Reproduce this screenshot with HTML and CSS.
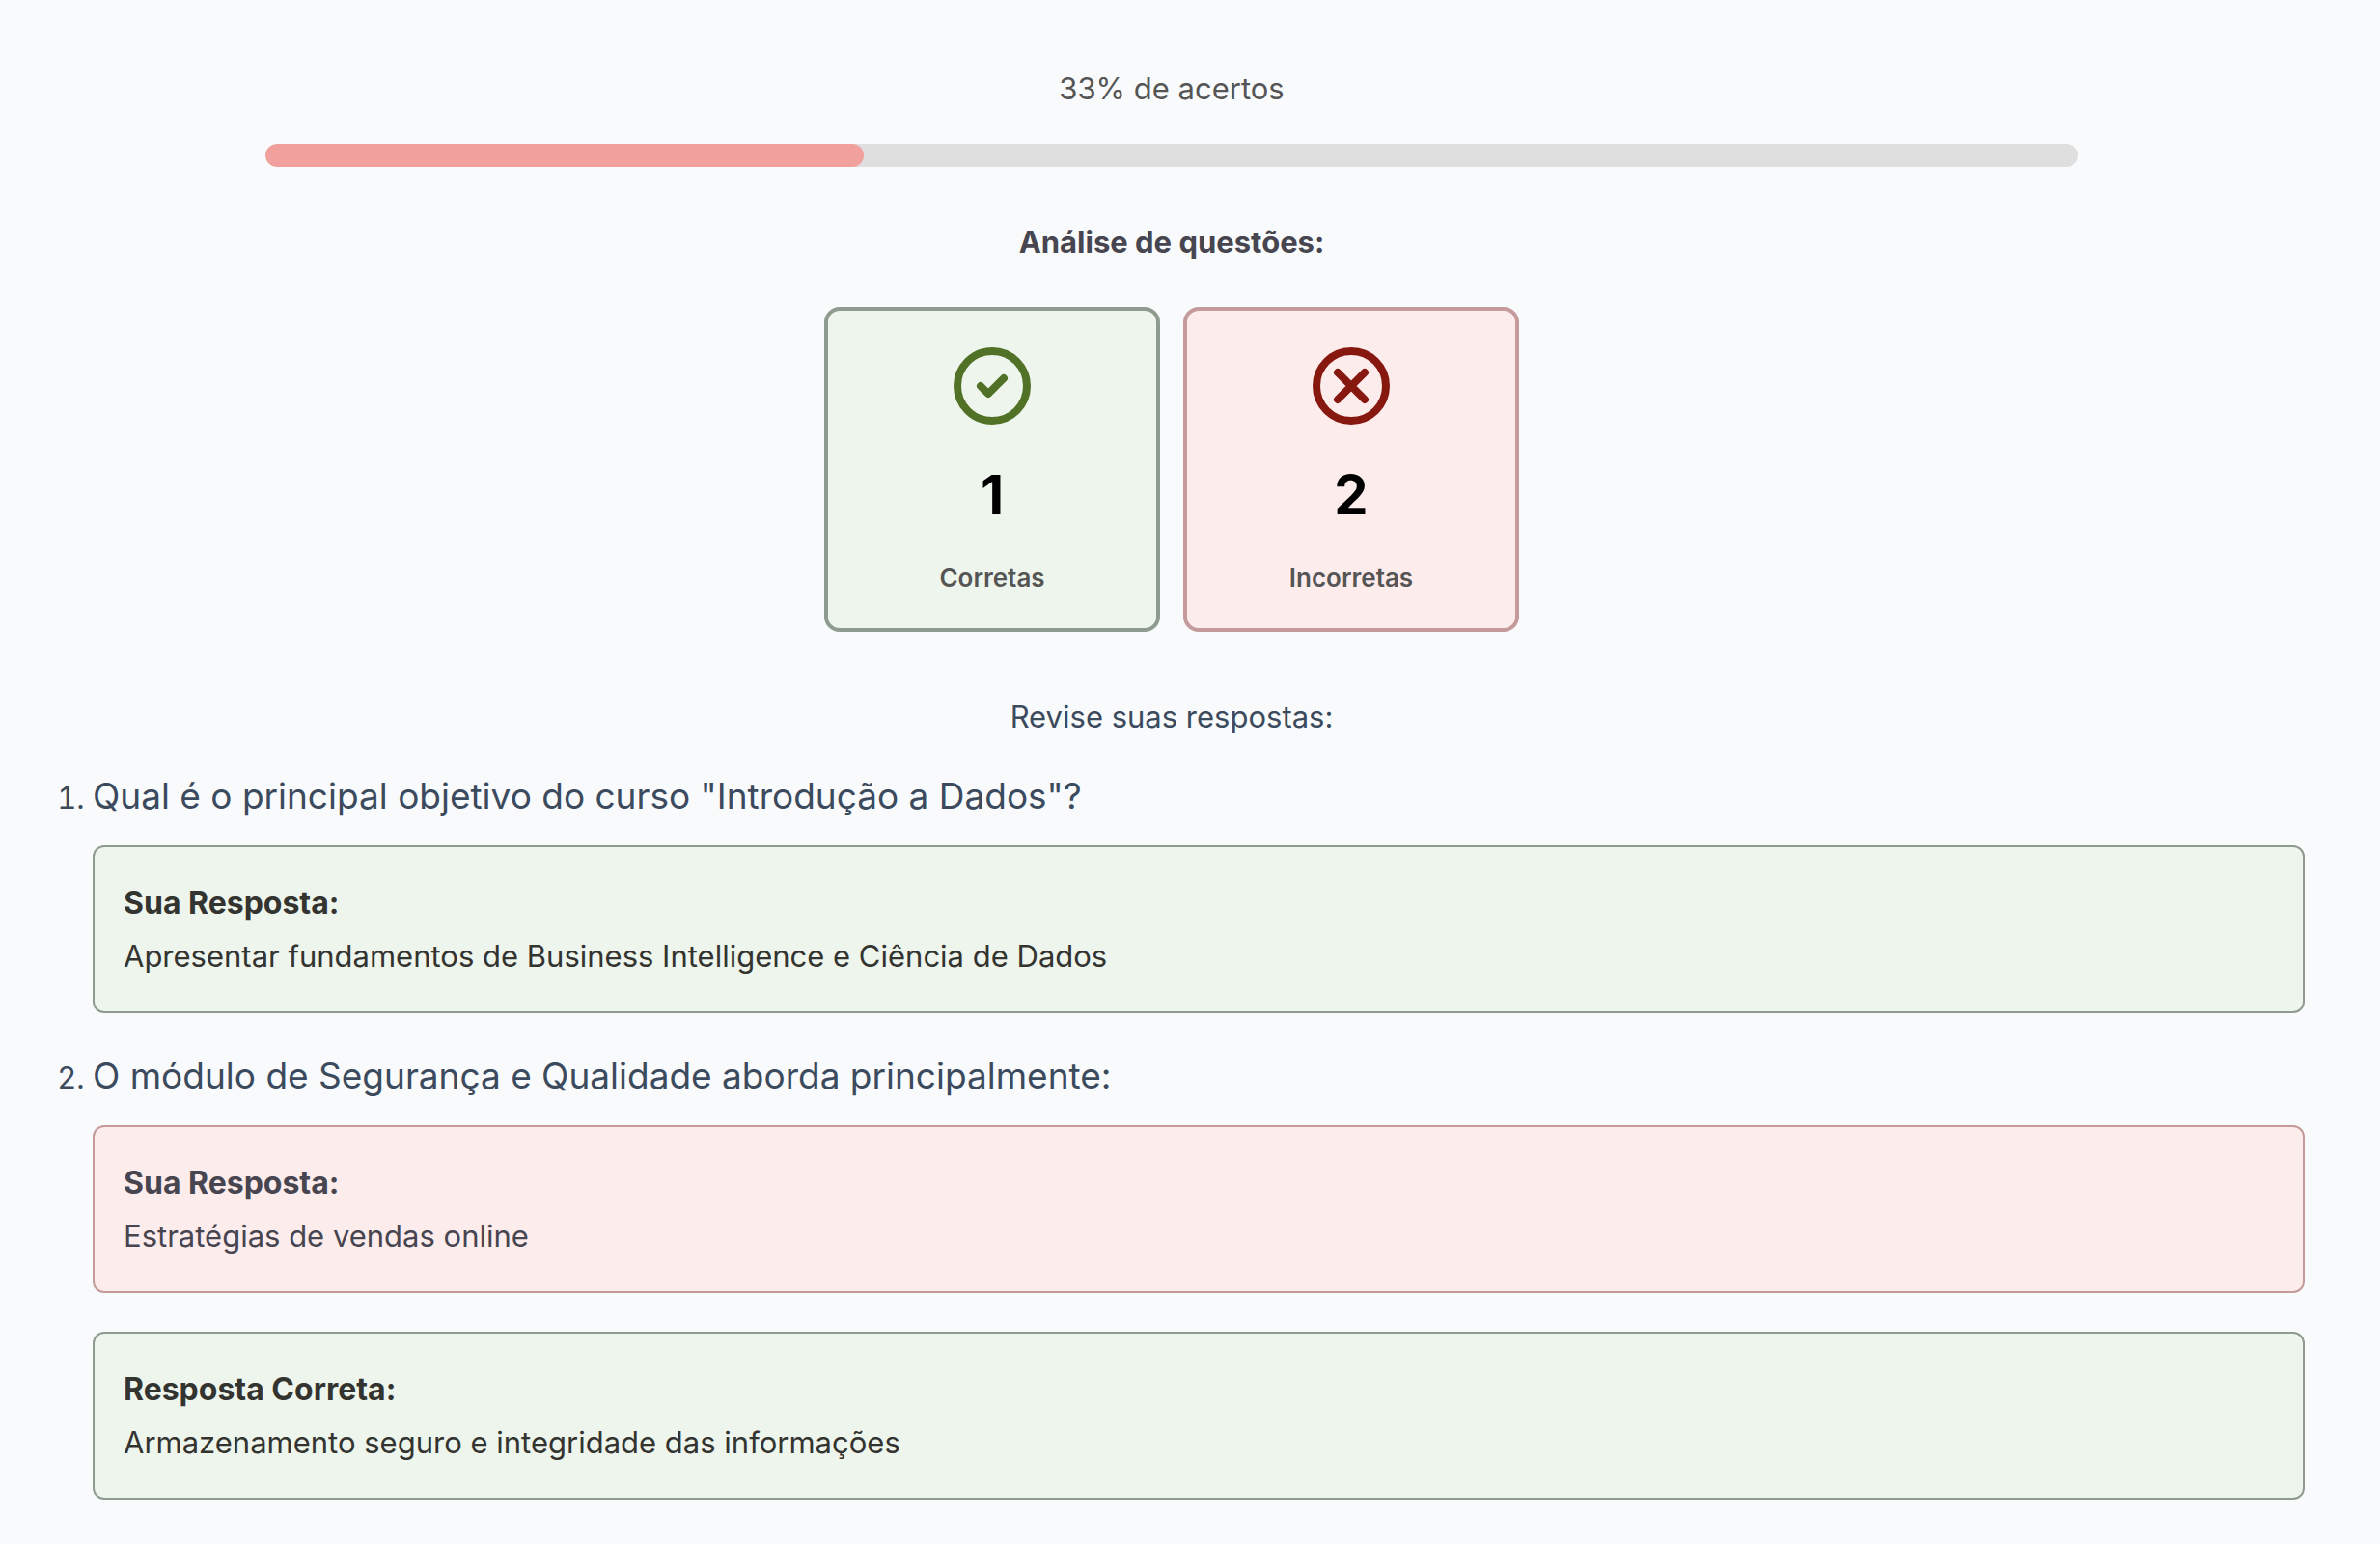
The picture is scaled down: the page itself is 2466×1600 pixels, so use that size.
FILE: index.html
```html
<!doctype html>
<html lang="pt-BR">
<head>
    <meta charset="UTF-8">
    <title>Resultado</title>
    <link rel="stylesheet" href="styles.css">
</head>
<body>
    <main class="resultado">
        <p class="acertos">33% de acertos</p>
        <div class="progresso">
            <div class="progresso-valor" style="width: 33%"></div>
        </div>

        <h2 class="titulo">Análise de questões:</h2>
        <div class="cards">
            <div class="card correta">
                <svg class="icone" viewBox="0 0 24 24">
                    <circle cx="12" cy="12" r="9"/>
                    <path d="M9 12l2 2l4 -4"/>
                </svg>
                <strong class="numero">1</strong>
                <span class="rotulo">Corretas</span>
            </div>
            <div class="card incorreta">
                <svg class="icone" viewBox="0 0 24 24">
                    <circle cx="12" cy="12" r="9"/>
                    <path d="M8.5 8.5l7 7M15.5 8.5l-7 7"/>
                </svg>
                <strong class="numero">2</strong>
                <span class="rotulo">Incorretas</span>
            </div>
        </div>

        <p class="revise">Revise suas respostas:</p>
        <ol class="questoes">
            <li>
                <h3 class="pergunta">Qual é o principal objetivo do curso "Introdução a Dados"?</h3>
                <div class="resposta correta">
                    <strong>Sua Resposta:</strong>
                    <p>Apresentar fundamentos de Business Intelligence e Ciência de Dados</p>
                </div>
            </li>
            <li>
                <h3 class="pergunta">O módulo de Segurança e Qualidade aborda principalmente:</h3>
                <div class="resposta incorreta">
                    <strong>Sua Resposta:</strong>
                    <p>Estratégias de vendas online</p>
                </div>
                <div class="resposta correta">
                    <strong>Resposta Correta:</strong>
                    <p>Armazenamento seguro e integridade das informações</p>
                </div>
            </li>
        </ol>
    </main>
</body>
</html>
```
FILE: styles.css
```css
* {
    box-sizing: border-box;
    margin: 0;
    padding: 0;
}
body {
    background: #f9fafc;
    color: #3b4a5c;
    font-family: Inter, "Liberation Sans", sans-serif;
    font-size: 31px;
    line-height: 48px;
}
.resultado {
    padding: 68px 78px 40px 40px;
}
.acertos {
    color: #555;
    text-align: center;
}

/* barra de progresso */
.progresso {
    width: 80%;
    height: 24px;
    margin: 33px auto 54px;
    background: #dfdfdf;
    border-radius: 12px;
    overflow: hidden;
}
.progresso-valor {
    height: 100%;
    background: #f2a09d;
    border-radius: 12px;
}

.titulo {
    color: #464550;
    font-size: 31px;
    font-weight: 700;
    text-align: center;
}
.correta {
    background: #eef5ec;
    border-color: #8e9b8e;
    color: #333330;
}
.incorreta {
    background: #fdecec;
    border-color: #c49a9a;
    color: #464550;
}

/* cards */
.cards {
    display: flex;
    justify-content: center;
    gap: 24px;
    margin: 43px 0 64px;
}
.card {
    display: flex;
    flex-direction: column;
    align-items: center;
    width: 348px;
    padding: 30px;
    border-width: 4px;
    border-style: solid;
    border-radius: 16px;
}
.icone {
    width: 96px;
    height: 96px;
    fill: none;
    stroke: #517226;
    stroke-width: 2;
    stroke-linecap: round;
    stroke-linejoin: round;
}
.incorreta .icone {
    stroke: #871810;
}
.numero {
    margin: 33px 0;
    color: #000;
    font-size: 56px;
    line-height: 64px;
}
.rotulo {
    margin-bottom: 2px;
    color: #555;
    font-size: 26px;
    font-weight: 600;
    line-height: 41px;
}

/* respostas */
.revise {
    text-align: center;
}
.questoes {
    margin-top: 30px;
    padding-left: 56px;
}
.questoes li + li {
    margin-top: 37px;
}
.pergunta {
    font-size: 37px;
    font-weight: 400;
    line-height: 56px;
}
.resposta {
    margin-top: 23px;
    padding: 30px;
    border-width: 2px;
    border-style: solid;
    border-radius: 12px;
    line-height: 55px;
}
.resposta + .resposta {
    margin-top: 40px;
}
.resposta strong {
    display: block;
    font-size: 32px;
    font-weight: 700;
}
```
